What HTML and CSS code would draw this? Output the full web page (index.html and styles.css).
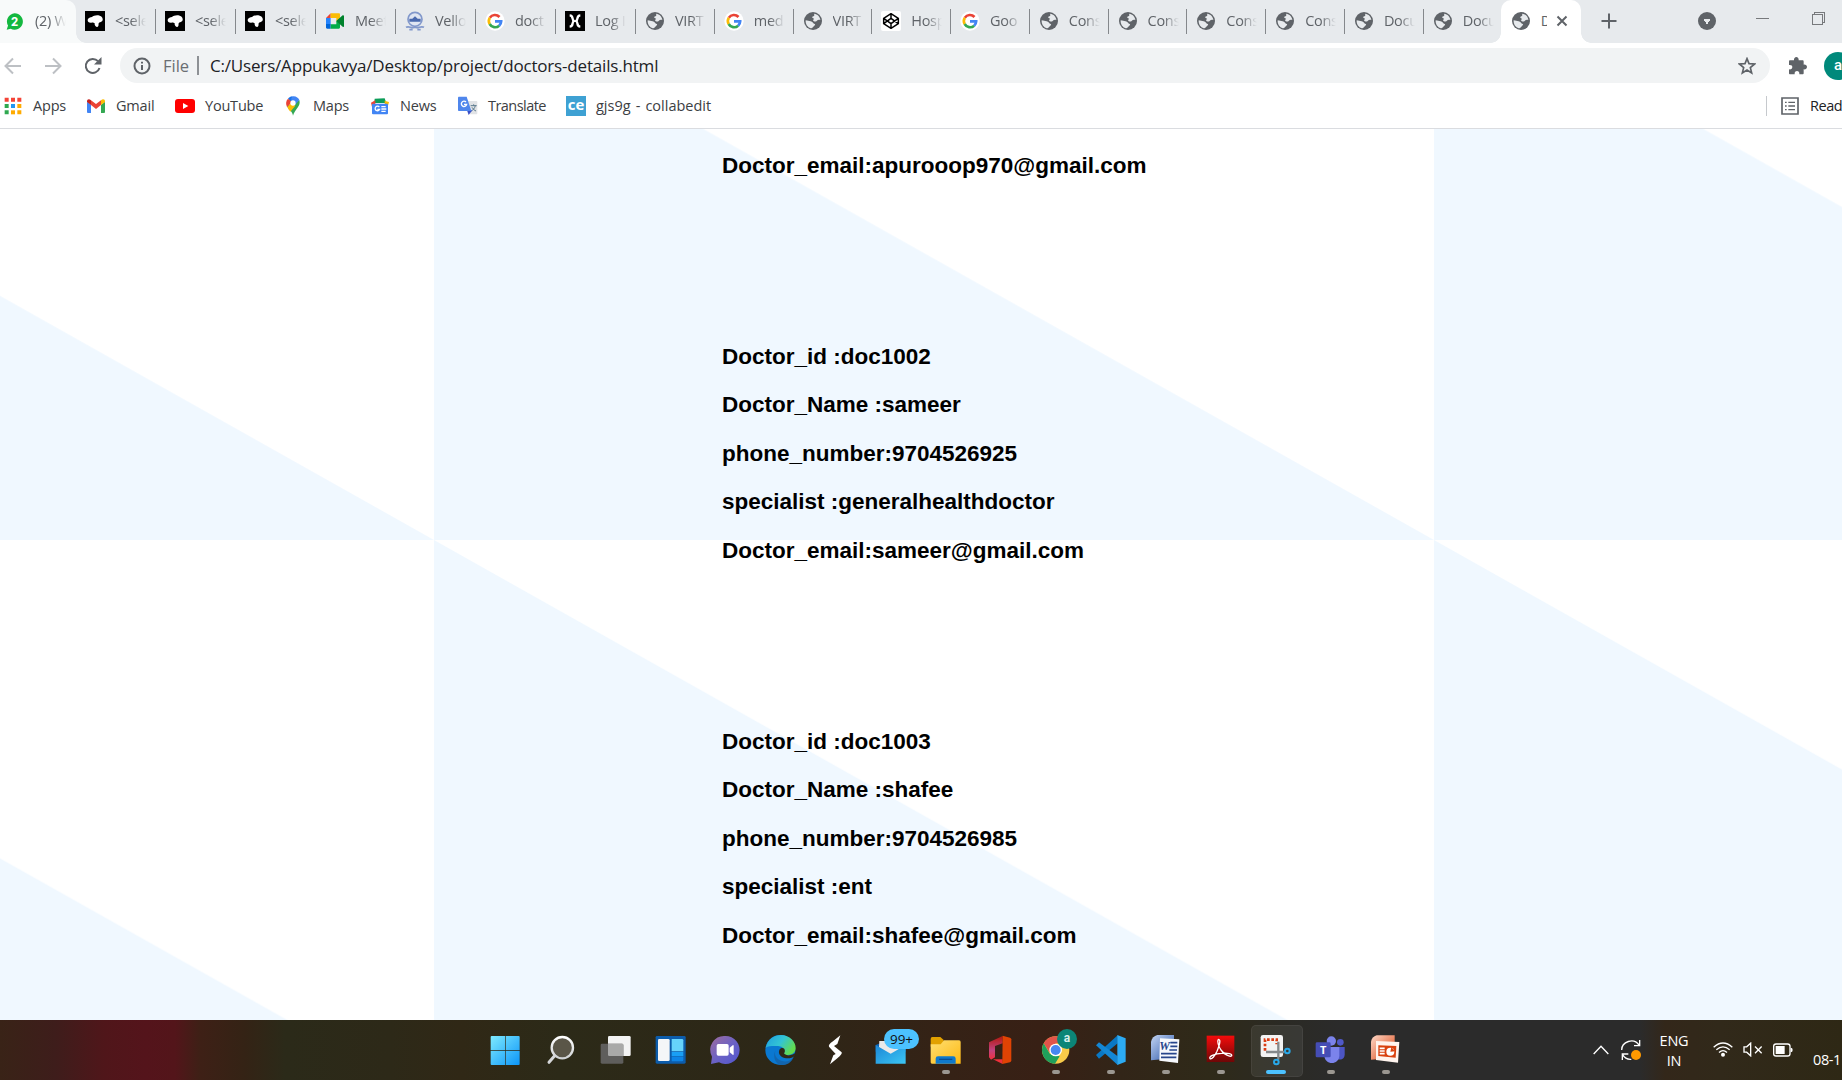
FILE: index.html
```html
<!DOCTYPE html>
<html lang="en">
<head>
<meta charset="utf-8">
<title>Doctors details</title>
<link rel="stylesheet" href="styles.css">
</head>
<body>
<svg class="defs" aria-hidden="true">
  <defs>
    <linearGradient id="gWin" x1="0" y1="0" x2="1" y2="1"><stop offset="0" stop-color="#7eeaff"/><stop offset="1" stop-color="#0c95f8"/></linearGradient>
    <linearGradient id="gRing" x1="0" y1="0" x2="0" y2="1"><stop offset="0" stop-color="#fff"/><stop offset="1" stop-color="#cfd2d4"/></linearGradient>
    <linearGradient id="gChat" x1="0" y1="0" x2="1" y2="1"><stop offset="0" stop-color="#a06c9c"/><stop offset=".5" stop-color="#6c62c4"/><stop offset="1" stop-color="#5156d0"/></linearGradient>
    <linearGradient id="gEdge" x1="0" y1="0" x2="1" y2=".5"><stop offset="0" stop-color="#1f9fe0"/><stop offset=".55" stop-color="#33c4d4"/><stop offset="1" stop-color="#62dc50"/></linearGradient>
    <linearGradient id="gFold" x1="0" y1="0" x2="1" y2="1"><stop offset="0" stop-color="#ffdf72"/><stop offset="1" stop-color="#fdb913"/></linearGradient>
    <linearGradient id="gOff" x1="0" y1="0" x2="0" y2="1"><stop offset="0" stop-color="#b2180c"/><stop offset=".6" stop-color="#c2437f"/><stop offset="1" stop-color="#f2303c"/></linearGradient>
    <linearGradient id="gWord" x1="0" y1="0" x2="1" y2="1"><stop offset="0" stop-color="#c3d5f3"/><stop offset="1" stop-color="#2a55a8"/></linearGradient>
    <linearGradient id="gPpt" x1="0" y1="0" x2="1" y2="1"><stop offset="0" stop-color="#ffd9c8"/><stop offset="1" stop-color="#d9420f"/></linearGradient>
    <linearGradient id="gPdf" x1="0" y1="0" x2="0" y2="1"><stop offset="0" stop-color="#f40b0b"/><stop offset="1" stop-color="#6e0606"/></linearGradient>
    <linearGradient id="gMail" x1="0" y1="0" x2="1" y2="1"><stop offset="0" stop-color="#1b86d6"/><stop offset="1" stop-color="#3cc6f4"/></linearGradient>
  </defs>
  <symbol id="i-globe" viewBox="0 0 60 60"><circle cx="30" cy="30" r="27" fill="#5f6368"/><path fill="#e7eaed" d="M33 8c11 1 18 9 19 19-4-2-8-1-11 3-3 3-10 2-11-3 4-2 3-5-1-6-3-2-1-4 2-5 4-1 3-5 2-8zM8 28c6 0 9 3 15 3 6 1 7 7 12 8 4 2-2 6-4 8-3 3-5 5-8 5C14 49 7 40 8 28z"/></symbol>
  <symbol id="i-sel" viewBox="0 0 60 60"><path d="M0 0h60v60H0z"/><path fill="#fff" d="M8 26c2-6 8-7 13-8 5-6 20-8 27-2 6 5 7 11 3 15-3 3-8 2-10 6-1 5 1 9-4 11-5 0-9-5-8-11-3-3-6-3-10-2-6 1-12-3-11-9z"/></symbol>
  <symbol id="i-google" viewBox="0 0 60 60"><circle cx="30" cy="30" r="29" fill="#fff"/><g fill="none" stroke-width="8"><path stroke="#ea4335" d="M43.500 18A18.500 18.500 0 0 0 14.500 20"/><path stroke="#fbbc05" d="M14.500 20a18.500 18.500 0 0 0-.5 19"/><path stroke="#34a853" d="M14 39a18.500 18.500 0 0 0 28.500 5"/><path stroke="#4285f4" d="M42.500 44A18.500 18.500 0 0 0 48.500 31H30"/></g></symbol>
  <symbol id="i-meet" viewBox="0 0 60 60"><path fill="#ea4335" d="M3 21L17 7v14z"/><path fill="#fbbc04" d="M17 7h24c3 0 4 1 4 4v12l-11 7V21H17z"/><path fill="#2684fc" d="M3 21h14v19H3z"/><path fill="#0066da" d="M3 39h14v14H7c-3 0-4-1-4-4z"/><path fill="#00ac47" d="M17 40h17V30l11-8v27c0 3-1 4-4 4H17z"/><path fill="#00832d" d="M34 30l19-17c2-1 4 0 4 2v31c0 2-2 3-4 1z"/></symbol>
  <symbol id="i-vit" viewBox="0 0 60 60"><circle cx="30" cy="25" r="21" fill="#dfe5f2" stroke="#8298cb" stroke-width="5"/><path fill="#4a69ae" d="M13 23h9l8-7 8 7h9v9H13z"/><path fill="none" stroke="#8298cb" stroke-width="5" d="M3 49c10-6 16 5 27 0 10 5 17-6 27 0M13 56h10M37 56h10"/></symbol>
  <symbol id="i-x" viewBox="0 0 60 60"><path d="M0 0h60v60H0z"/><path fill="none" stroke="#fff" stroke-width="7" d="M14 13c13 1 5 13 13 17-8 4 0 16-13 17M46 13c-13 1-5 13-13 17 8 4 0 16 13 17"/></symbol>
  <symbol id="i-pen" viewBox="0 0 60 60"><rect width="60" height="60" rx="6" fill="#fff"/><path fill="none" stroke="#000" stroke-width="4.500" stroke-linejoin="round" d="M30 8l22 14v16L30 52 8 38V22zM30 8v14M30 38v14M8 22l22 16 22-16M8 38l22-16 22 16"/></symbol>
</svg>

<header class="tabstrip">
  <div class="tab tab-first">
    <svg class="fav-wa" viewBox="0 0 50 50"><path fill="#14b83f" d="M25 1a24 24 0 1 1-11 45L2 49l4-12A24 24 0 0 1 25 1z"/><text x="25" y="37" text-anchor="middle" font-family="Inter, sans-serif" font-weight="800" font-size="33" fill="#fff">2</text></svg>
    <span class="label">(2) W</span>
  </div>
  <div class="tab"><svg><use href="#i-sel"/></svg><span class="label">&lt;sele</span></div>
  <div class="tab"><svg><use href="#i-sel"/></svg><span class="label">&lt;sele</span></div>
  <div class="tab"><svg><use href="#i-sel"/></svg><span class="label">&lt;sele</span></div>
  <div class="tab"><svg><use href="#i-meet"/></svg><span class="label">Meet</span></div>
  <div class="tab"><svg><use href="#i-vit"/></svg><span class="label">Vello</span></div>
  <div class="tab"><svg><use href="#i-google"/></svg><span class="label">doct</span></div>
  <div class="tab"><svg><use href="#i-x"/></svg><span class="label">Log I</span></div>
  <div class="tab narrow"><svg><use href="#i-globe"/></svg><span class="label">VIRT</span></div>
  <div class="tab narrow"><svg><use href="#i-google"/></svg><span class="label">med</span></div>
  <div class="tab narrow"><svg><use href="#i-globe"/></svg><span class="label">VIRT</span></div>
  <div class="tab narrow"><svg><use href="#i-pen"/></svg><span class="label">Hosp</span></div>
  <div class="tab narrow"><svg><use href="#i-google"/></svg><span class="label">Goo</span></div>
  <div class="tab narrow"><svg><use href="#i-globe"/></svg><span class="label">Cons</span></div>
  <div class="tab narrow"><svg><use href="#i-globe"/></svg><span class="label">Cons</span></div>
  <div class="tab narrow"><svg><use href="#i-globe"/></svg><span class="label">Cons</span></div>
  <div class="tab narrow"><svg><use href="#i-globe"/></svg><span class="label">Cons</span></div>
  <div class="tab narrow"><svg><use href="#i-globe"/></svg><span class="label">Docu</span></div>
  <div class="tab last"><svg><use href="#i-globe"/></svg><span class="label">Docu</span></div>
  <div class="tab active"><svg><use href="#i-globe"/></svg><span class="label">D</span>
    <svg class="close" viewBox="0 0 12 12"><path d="M1.500 1.500l9 9M10.500 1.500l-9 9"/></svg>
  </div>
  <svg class="newtab" viewBox="0 0 16 16"><path d="M8 .5v15M.5 8h15"/></svg>
  <div class="winctl">
    <svg width="18" height="18" viewBox="0 0 18 18"><circle cx="9" cy="9" r="9" fill="#5f6368"/><path fill="#e7eaed" d="M5 6.500h8L9 12.500z"/></svg>
    <svg class="min" width="13" height="13" viewBox="0 0 13 13"><path d="M0 6.500h13"/></svg>
    <svg class="restore" width="13" height="13" viewBox="0 0 13 13"><path d="M.5 2.500h10v10H.5zM2.500 2.500v-2h10v10h-2"/></svg>
  </div>
</header>

<div class="toolbar">
  <svg class="nav back" viewBox="0 0 18 18"><path d="M17 9H2M9 1.500L1.500 9 9 16.500"/></svg>
  <svg class="nav fwd" viewBox="0 0 18 18"><path d="M1 9h15M9 1.500L16.500 9 9 16.500"/></svg>
  <svg class="nav reload" viewBox="0 0 18 18"><path d="M15.500 11A7 7 0 1 1 14 4.200"/><path class="head" d="M17.500 0v7.500H10z"/></svg>
  <div class="omnibox">
    <svg class="info" viewBox="0 0 18 18"><circle cx="9" cy="9" r="7.500"/><path d="M9 8v5M9 4.800v1.700"/></svg>
    <span class="scheme">File</span><i class="bar"></i>
    <span class="url">C:/Users/Appukavya/Desktop/project/doctors-details.html</span>
    <svg class="star" viewBox="0 0 54 54"><path d="M27 5l6 15 17 1-13 11 4 16-14-9-14 9 4-16L4 21l17-1z"/></svg>
  </div>
  <svg class="puzzle" viewBox="0 0 54 54"><path fill="#5f6368" d="M0 14c0-3 1-4 4-4h11c-1-6 3-10 7-10s8 4 7 10h11c3 0 4 1 4 4v9c6-1 10 3 10 7s-4 8-10 7v11c0 3-1 4-4 4H31c1-7-3-10-7-10s-8 3-7 10H4c-3 0-4-1-4-4V37c7 1 10-3 10-7s-3-7-10-6z"/></svg>
  <div class="avatar">a</div>
</div>

<nav class="bookmarks">
  <a class="bm apps"><svg viewBox="0 0 60 60"><path fill="#f44336" d="M5 5h12v12H5zM24 5h12v12H24zM43 5h12v12H43z"/><path fill="#2fa84f" d="M5 24h12v12H5zM5 43h12v12H5z"/><path fill="#2196f3" d="M24 24h12v12H24z"/><path fill="#ffab00" d="M43 24h12v12H43zM43 43h12v12H43z"/><path fill="#ffab00" d="M24 43h12v12H24z"/></svg>Apps</a>
  <a class="bm gmail"><svg viewBox="0 0 60 60"><path fill="#4285f4" d="M3 17l12 9v25H7c-3 0-4-2-4-4z"/><path fill="#34a853" d="M57 17l-12 9v25h8c3 0 4-2 4-4z"/><path fill="#ea4335" d="M15 13l15 11 15-11v14L30 39 15 27z"/><path fill="#c5221f" d="M3 16c0-7 7-8 12-3v14L3 18z"/><path fill="#fbbc04" d="M57 16c0-7-7-8-12-3v14l12-9z"/></svg>Gmail</a>
  <a class="bm yt"><svg viewBox="0 0 60 60"><rect y="9" width="60" height="42" rx="9" fill="#f00"/><path fill="#fff" d="M24 21l16 9-16 9z"/></svg>YouTube</a>
  <a class="bm maps"><svg viewBox="0 0 60 60"><path fill="#34a853" d="M30 59c-1-12-13-18-18-29L49 12c6 19-14 28-19 47z"/><path fill="#fbbc04" d="M13 33l12-14 12 10-15 18c-4-5-7-8-9-14z"/><path fill="#4285f4" d="M28 1c10-2 18 4 21 11L35 28 22 16z"/><path fill="#1a73e8" d="M15 8C18 4 23 1 28 1l-4 16z"/><path fill="#ea4335" d="M15 8l12 10-15 15c-4-9-4-18 3-25z"/><circle cx="30" cy="21" r="8" fill="#fff"/></svg>Maps</a>
  <a class="bm news"><svg viewBox="0 0 60 60"><path fill="#0c9d58" d="M14 8l30-1 5 14H13z"/><path fill="#ea4335" d="M3 20l13-7v20H6z"/><path fill="#fbbc04" d="M57 18l-13-4v19h9z"/><rect x="6" y="23" width="48" height="32" rx="3" fill="#4285f4"/><path fill="none" stroke="#fff" stroke-width="4" d="M28 33a7 7 0 1 0 1 7h-7M34 32h13M34 39h15M34 46h13"/></svg>News</a>
  <a class="bm trans"><svg viewBox="0 0 60 60"><path fill="#e1e3e6" d="M25 15h29c3 0 4 1 4 4v32c0 3-1 4-4 4H36z"/><path fill="none" stroke="#59798c" stroke-width="3" d="M38 29h18M47 25v4M52 29c-2 9-8 13-12 16M42 34c3 6 8 9 12 11"/><path fill="#3a4fc7" d="M27 43h16L32 57z"/><path fill="#4f86ec" d="M4 2h22l14 43H4c-3 0-4-1-4-4V6c0-3 1-4 4-4z"/><path fill="none" stroke="#fff" stroke-width="4" d="M24 18a8 8 0 1 0 2 7h-8"/></svg>Translate</a>
  <a class="bm ce"><span class="ce-ico">ce</span>gjs9g - collabedit</a>
  <a class="reading"><svg viewBox="0 0 54 54"><path d="M3 3h48v48H3z"/><path class="thin" d="M12 16h5M12 27h5M12 38h5M22 16h20M22 27h20M22 38h20"/></svg>Read</a>
</nav>

<main class="page">
  <section class="doctor">
    <h3>Doctor_email:apurooop970@gmail.com</h3>
  </section>
  <section class="doctor">
    <h3>Doctor_id :doc1002</h3>
    <h3>Doctor_Name :sameer</h3>
    <h3>phone_number:9704526925</h3>
    <h3>specialist :generalhealthdoctor</h3>
    <h3>Doctor_email:sameer@gmail.com</h3>
  </section>
  <section class="doctor">
    <h3>Doctor_id :doc1003</h3>
    <h3>Doctor_Name :shafee</h3>
    <h3>phone_number:9704526985</h3>
    <h3>specialist :ent</h3>
    <h3>Doctor_email:shafee@gmail.com</h3>
  </section>
</main>

<footer class="taskbar">
  <div class="apps-row">
    <div class="app"><svg viewBox="0 0 90 90"><path fill="url(#gWin)" d="M5 3h40v43H2V6q0-3 3-3zM47 3h39q3 0 3 3v40H47zM2 48h43v42H5q-3 0-3-3zM47 48h42v39q0 3-3 3H47z"/></svg></div>
    <div class="app"><svg viewBox="0 0 90 90"><circle cx="52" cy="38" r="32" fill="#5a5648" stroke="url(#gRing)" stroke-width="7"/><path stroke="#d5d7d9" stroke-width="9" stroke-linecap="round" d="M29 62L12 82"/></svg></div>
    <div class="app"><svg viewBox="0 0 90 90"><rect x="24" y="3" width="68" height="60" rx="4" fill="#f3f3f3"/><rect x="2" y="26" width="68" height="60" rx="4" fill="#5f5e5c"/><path fill="#a9a9a8" d="M24 26h42q4 0 4 4v33H28q-4 0-4-4z"/></svg></div>
    <div class="app"><svg viewBox="0 0 90 90"><rect x="2" y="3" width="90" height="83" rx="4" fill="#0c5cab"/><rect x="9" y="12" width="35" height="66" rx="4" fill="#f4f6f8"/><path fill="#66d3fb" d="M50 12h31q4 0 4 4v33H50z"/><path fill="#199ff5" d="M50 51h35v13H50z"/><path fill="#0d84e6" d="M50 66h35v9q0 4-4 4H50z"/></svg></div>
    <div class="app"><svg viewBox="0 0 90 90"><path fill="url(#gChat)" d="M46 3a42 42 0 1 1-19 79L3 87l3-22A42 42 0 0 1 46 3z"/><rect x="20" y="27" width="36" height="35" rx="5" fill="#fff"/><path fill="#fff" d="M59 38l10-8q2 0 2 2v26q0 2-2 2l-10-8z"/></svg></div>
    <div class="app"><svg viewBox="0 0 90 90"><circle cx="46" cy="45" r="45" fill="#0a78d1"/><path fill="url(#gEdge)" d="M2 38C8 12 28 0 48 0c26 0 45 20 44 40-1 16-16 23-32 19-6-2-1-5-3-14-3-12-16-13-27-12-12 0-22 1-28 5z"/><path fill="#1265ae" d="M33 44c-8 12 0 28 16 33 14 5 26 1 36-9-6 15-22 24-40 22C29 84 22 60 33 44z"/><path fill="#302818" d="M43 45c-4 10 2 20 16 24 12 3 24-1 30-6 2-3 4-8 4-11-8 9-28 14-36 3 4-4 4-15-4-16-5 0-8 2-10 6z"/></svg></div>
    <div class="app"><svg viewBox="0 0 90 90"><path fill="#fff" d="M61 1L39 19q-15 10-12 16l20 22-7 4-10 27 22-18q16-13 13-18L42 33l10-6z"/></svg></div>
    <div class="app"><svg viewBox="0 0 90 90"><path fill="#0d61b2" d="M2 30l45-18 45 18v20H2z"/><path fill="#ece9e8" d="M13 18h68v22L47 62 12 38z"/><path fill="url(#gMail)" d="M2 30l45 26 45-26v56H2z"/></svg><span class="badge count">99+</span></div>
    <div class="app run"><svg viewBox="0 0 90 90"><path fill="#e2a100" d="M2 12q0-6 5-6h24l10 9v20H2z"/><path fill="url(#gFold)" d="M2 28h30l10-12h45q5 0 5 5v65H6q-4 0-4-4z"/><path fill="#0f79cc" d="M17 86V71q0-7 7-7h46q7 0 7 7v15z"/><path stroke="#0a4f94" stroke-width="4" d="M27 73h40"/></svg></div>
    <div class="app"><svg viewBox="0 0 90 90"><path fill="url(#gOff)" d="M12 22L53 3v22L30 33v34l-12 7-6-7z"/><path fill="#ef2f3b" d="M24 73h29v14z"/><path fill="#e04304" d="M53 2l22 6q4 2 4 5v63q0 4-4 6l-23 5z"/></svg></div>
    <div class="app run"><svg viewBox="0 0 90 90"><circle cx="47" cy="45" r="41" fill="#f8ca49"/><path fill="#e0544a" d="M11 25a41 41 0 0 1 72 0H47v20L28 52z"/><path fill="#1fa05c" d="M11 25l19 32 29 7-14 22A41 41 0 0 1 11 25z"/><circle cx="47" cy="45" r="19" fill="#fff"/><circle cx="47" cy="45" r="15" fill="#4687f2"/></svg><span class="badge user">a</span></div>
    <div class="app run"><svg viewBox="0 0 90 90"><path fill="#0a78c4" d="M3 60L68 1v24L12 71z"/><path fill="#1487d4" d="M3 31l9-9 56 42v26z"/><path fill="#2cabf4" d="M67 0l25 10v70L67 90z"/></svg></div>
    <div class="app run"><svg viewBox="0 0 90 90"><path fill="url(#gWord)" d="M22 0h50v70L3 76V20Q7 4 22 0z"/><path fill="#f6f8fc" d="M30 10l58 3-4 71-56-7z"/><path stroke="#27458b" stroke-width="5" d="M61 23h21M61 34h21M58 45h23M33 56h47M33 67h46"/><text x="28" y="46" font-family="Liberation Serif, serif" font-weight="700" font-style="italic" font-size="36" fill="#27458b">W</text></svg></div>
    <div class="app run"><svg viewBox="0 0 90 90"><rect x="5" y="2" width="83" height="79" fill="url(#gPdf)"/><path fill="none" stroke="#fff" stroke-width="4" stroke-linejoin="round" d="M40 13c9 0 3 18-4 36C29 64 20 74 15 71c-5-8 17-15 35-16 20-2 32 2 30 7-5 5-22-3-32-17-8-12-12-27-8-32z"/></svg></div>
    <div class="app run selected"><svg viewBox="0 0 90 90"><rect x="2" y="0" width="67" height="66" rx="7" fill="#f3f3f3"/><path fill="none" stroke="#db3d14" stroke-width="8" stroke-dasharray="8 5" d="M15 47V14h35v14"/><path stroke="#85898c" stroke-width="7" d="M55 20v54M18 51h55"/><g fill="none" stroke="#29a9ea" stroke-width="6"><circle cx="49" cy="81" r="7"/><circle cx="82" cy="48" r="7"/></g></svg></div>
    <div class="app run"><svg viewBox="0 0 90 90"><circle cx="49" cy="18" r="14" fill="#7b83eb"/><circle cx="76" cy="22" r="10" fill="#5059c9"/><path fill="#4c55c4" d="M66 36h23v22c0 15-11 18-24 14z"/><path fill="#7b83eb" d="M28 36h45v25c0 31-45 31-45 0z"/><rect x="2" y="22" width="45" height="45" rx="4" fill="#454db5"/><text x="24.500" y="56" text-anchor="middle" font-family="Open Sans, sans-serif" font-weight="700" font-size="33" fill="#fff">T</text></svg></div>
    <div class="app run"><svg viewBox="0 0 90 90"><path fill="url(#gPpt)" d="M20 1h54v68L3 74V20Q6 5 20 1z"/><path fill="#fff4ee" d="M18 18l70 3-4 62-66-8z"/><path fill="#d9420f" d="M25 31l54 2-2 35-52-5z"/><path fill="none" stroke="#fff" stroke-width="5" d="M29 40h15M29 48h15M29 56h15"/><circle cx="61" cy="50" r="12" fill="#fff"/><path fill="#d9420f" d="M61 50l3-13 12 12z"/></svg></div>
  </div>
  <div class="tray">
    <svg class="chev" viewBox="0 0 48 28"><path d="M2 26L24 3l22 23"/></svg>
    <svg class="sync" viewBox="0 0 60 60"><path d="M2 30C2 5 38-8 54 15M56 0v17H39M22 42H4v18M5 44c5 9 15 15 26 14"/><circle cx="45" cy="45" r="15"/></svg>
    <div class="lang">ENG<br>IN</div>
    <svg class="wifi" viewBox="0 0 60 44"><path d="M2 15Q30-10 58 15M10 23q20-18 40 0M18 31q12-11 24 0"/><circle cx="30" cy="38" r="6"/></svg>
    <svg class="vol" viewBox="0 0 60 44"><path d="M3 14h8L23 3v38L11 30H3zM36 13l20 20M56 13L36 33"/></svg>
    <svg class="bat" viewBox="0 0 60 42"><rect x="2" y="3" width="49" height="36" rx="7"/><path d="M8 9h27v24H8z" class="fill"/><path class="fill" d="M53 14q6 0 6 7t-6 7z"/></svg>
    <div class="date">08-11</div>
  </div>
</footer>
</body>
</html>
```
FILE: styles.css
```css
* { box-sizing: border-box; }
body {
  margin: 0;
  width: 1842px;
  height: 1080px;
  overflow: hidden;
  display: flex;
  flex-direction: column;
  background: #fff;
  font-family: "Open Sans", "Noto Sans", sans-serif;
  color: #3c4043;
}
svg { flex: none; display: block; }
.defs { position: absolute; width: 0; height: 0; }

/* tab strip */
.tabstrip {
  flex: none;
  height: 43px;
  display: flex;
  background: #e7eaed;
}
.tab {
  flex: none;
  width: 80px;
  height: 43px;
  display: flex;
  align-items: center;
  padding: 0 0 1px 9px;
  background: linear-gradient(#85888c, #85888c) right 9px / 1px 25px no-repeat;
  font-size: 14.500px;
}
.tab > svg { width: 20px; height: 20px; margin-right: 10px; }
.tab .label {
  width: 31px;
  overflow: hidden;
  white-space: nowrap;
  line-height: 24px;
  letter-spacing: -0.3px;
  color: #5f6368;
  -webkit-mask-image: linear-gradient(90deg, #000 50%, transparent);
  mask-image: linear-gradient(90deg, #000 50%, transparent);
}
.tab-first {
  position: relative;
  width: 76px;
  padding-left: 6px;
  background: #f8fafa;
  border-top-right-radius: 10px;
}
.tab > .fav-wa { width: 17px; height: 17px; margin-right: 12px; }
.narrow { width: 78.780px; }
.last { width: 77.200px; background: none; }
.active {
  position: relative;
  width: 80px;
  padding-left: 10px;
  background: #fff;
  border-radius: 10px 10px 0 0;
}
.active::before, .active::after, .tab-first::after {
  content: "";
  position: absolute;
  bottom: 0;
  width: 10px;
  height: 10px;
}
.active::before { left: -10px; background: radial-gradient(circle at 0 0, transparent 9.500px, #fff 10px); }
.active::after { right: -10px; background: radial-gradient(circle at 100% 0, transparent 9.500px, #fff 10px); }
.tab-first::after { right: -10px; background: radial-gradient(circle at 100% 0, transparent 9.500px, #f8fafa 10px); }
.active .label { width: 6px; mask-image: none; -webkit-mask-image: none; }
.active > .close { width: 12px; height: 12px; margin: 0 0 0 9px; }
.close path, .newtab path { fill: none; stroke: #5f6368; stroke-width: 2; }
.newtab { width: 16px; height: 16px; margin: 13px 0 0 20px; }
.winctl { display: flex; margin: 12px 0 0 81px; }
.winctl path { shape-rendering: crispEdges; }
.winctl .min, .winctl .restore { fill: none; stroke: #77797c; }
.winctl .min { margin-left: 40px; }
.winctl .restore { margin-left: 43px; }

/* address bar */
.toolbar {
  flex: none;
  height: 45px;
  display: flex;
  align-items: center;
  padding-left: 4px;
}
.nav { width: 18px; height: 18px; fill: none; stroke: #bdc0c4; stroke-width: 2; }
.fwd { margin-left: 22px; }
.reload { margin-left: 22px; stroke: #5f6368; }
.reload .head { fill: #5f6368; stroke: none; }
.omnibox {
  flex: none;
  display: flex;
  align-items: center;
  width: 1650px;
  height: 35px;
  margin-left: 18px;
  padding: 0 14px 0 13px;
  border-radius: 18px;
  background: #f1f3f4;
  font-size: 17px;
  white-space: nowrap;
}
.info { width: 18px; height: 18px; fill: none; stroke: #5f6368; stroke-width: 2; }
.scheme { width: 25px; margin-left: 12px; color: #6a6e73; font-size: 16.500px; }
.bar { width: 2px; height: 19px; margin: 0 11px 0 9px; background: #8e9195; }
.url { flex: 1; color: #202124; letter-spacing: -0.180px; }
.star { width: 18px; height: 18px; fill: none; stroke: #5f6368; stroke-width: 5; }
.puzzle { width: 18px; height: 18px; margin-left: 19px; }
.avatar {
  flex: none;
  width: 28px;
  height: 28px;
  margin-left: 17px;
  padding-left: 10px;
  border-radius: 50%;
  background: #00897b;
  color: #fff;
  font: 500 15px/26px Roboto, sans-serif;
}

/* bookmarks */
.bookmarks {
  flex: none;
  height: 41px;
  display: flex;
  align-items: center;
  padding: 0 0 5px 3px;
  border-bottom: 1px solid #dadce0;
  font-size: 14.500px;
  white-space: nowrap;
}
.bm { flex: none; display: flex; align-items: center; letter-spacing: -0.2px; }
.bm svg { width: 20px; height: 20px; margin-right: 10px; }
.apps { width: 83px; }
.gmail { width: 89px; }
.yt { width: 108px; }
.maps { width: 87px; }
.news { width: 88px; }
.trans { width: 108px; letter-spacing: -0.550px; }
.ce { flex: 1; letter-spacing: 0; word-spacing: 1.300px; }
.ce-ico {
  width: 20px;
  height: 20px;
  margin-right: 10px;
  background: #3ea1d3;
  color: #fff;
  font-weight: 700;
  font-size: 15px;
  line-height: 17px;
  text-align: center;
}
.reading {
  flex: none;
  width: 76px;
  height: 20px;
  display: flex;
  align-items: center;
  border-left: 1px solid #c6c9cd;
  padding-left: 14px;
  color: #202124;
  letter-spacing: -0.450px;
}
.reading svg { width: 18px; height: 18px; margin-right: 11px; fill: none; stroke: #5f6368; stroke-width: 5; }
.reading .thin { stroke-width: 4; }

/* page */
.page {
  flex: none;
  height: 891px;
  overflow: hidden;
  padding: 24px 0 0 722px;
  background: linear-gradient(to top right, #f0f8ff 49.950%, #fff 50.050%) 434px -151.500px / 1000px 562.500px;
  color: #000;
  font-family: "Liberation Sans", Arial, sans-serif;
}
.doctor { margin-bottom: 164.900px; }
.doctor h3 {
  margin: 0 0 22.500px;
  font-size: 22.500px;
  line-height: 26px;
  font-weight: 700;
}
.doctor h3:last-child { margin-bottom: 0; }

/* taskbar */
.taskbar {
  flex: none;
  height: 60px;
  display: flex;
  padding-left: 477px;
  background: linear-gradient(90deg, #392317 0, #3e1d1b 55px, #50161a 105px, #54141b 145px, #53151a 175px, #3e2016 200px, #342315 245px, #2b2a19 285px, #2d2918 390px, #302816 460px, #2c2a18 560px, #2d2717 780px, #352216 950px, #382015 1040px, #322518 1120px, #2f2a19 1210px, #2b2a24 1280px, #2b2b2b 1340px, #2b2b2b 1640px, #33271a 1665px, #31291a 1720px, #2e2815 1842px);
}
.apps-row { flex: none; display: flex; }
.app { position: relative; width: 55px; height: 60px; padding: 15px 12.500px; }
.app svg { width: 30px; height: 30px; overflow: visible; }
.run::after {
  content: "";
  position: absolute;
  left: 25px;
  top: 50px;
  width: 8px;
  height: 4px;
  border-radius: 2px;
  background: #9b9791;
}
.selected::before {
  content: "";
  position: absolute;
  left: 4px;
  top: 5px;
  width: 50px;
  height: 50px;
  border-radius: 5px;
  background: rgba(255, 255, 255, .07);
  border: 1px solid rgba(255, 255, 255, .06);
}
.selected svg { position: relative; }
.selected::after { left: 19px; width: 20px; background: #4cc2ff; }
.badge { position: absolute; top: 9px; text-align: center; }
.count {
  left: 22px;
  width: 35px;
  height: 20px;
  border-radius: 10px;
  background: #4cc2ff;
  color: #111;
  font-size: 13.500px;
  line-height: 20px;
}
.user {
  left: 30px;
  width: 20px;
  height: 20px;
  border-radius: 50%;
  background: #0c8577;
  color: #d9eeeb;
  font: 700 12px/19px Roboto, sans-serif;
}
.tray {
  display: flex;
  flex: 1;
  padding-left: 181px;
  color: #fff;
  white-space: nowrap;
}
.tray svg { fill: none; stroke: #fff; stroke-width: 4; }
.chev { width: 16px; height: 10px; margin-top: 25px; }
.sync { width: 20px; height: 20px; margin: 20px 0 0 12px; overflow: visible; }
.sync circle { fill: #ff9a00; stroke: none; }
.lang { width: 30px; margin: 11px 0 0 18px; font-size: 14.500px; line-height: 20px; text-align: center; letter-spacing: -0.2px; }
.wifi { width: 20px; height: 15px; margin: 22px 0 0 24px; }
.wifi circle { fill: #fff; stroke: none; }
.vol { width: 20px; height: 15px; margin: 22px 0 0 10px; }
.bat { width: 20px; height: 14px; margin: 23px 0 0 10px; }
.bat .fill { fill: #fff; stroke: none; }
.date { margin: 30px 0 0 20px; font-size: 14.500px; line-height: 20px; letter-spacing: -0.4px; }
```
